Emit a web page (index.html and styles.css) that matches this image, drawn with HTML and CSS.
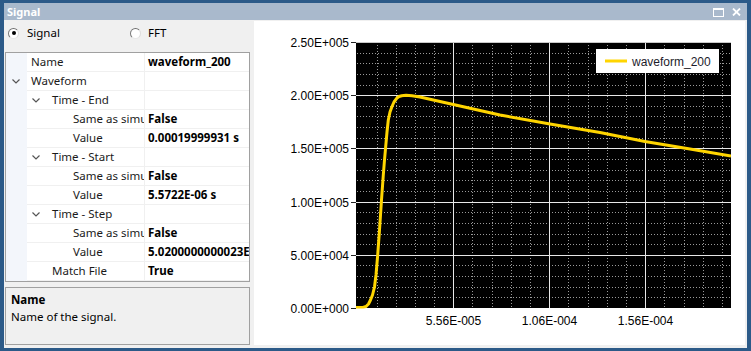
FILE: index.html
```html
<!DOCTYPE html>
<html>
<head>
<meta charset="utf-8">
<link rel="stylesheet" href="styles.css">
</head>
<body>
<div class="window">
  <div class="titlebar">
    <span class="title">Signal</span>
    <span class="tbtns">
      <svg class="tb-max" width="11" height="9" viewBox="0 0 11 9"><rect x="0.5" y="0.5" width="10" height="8" fill="none" stroke="#fff" stroke-width="1"/><rect x="0" y="0" width="11" height="2" fill="#fff"/></svg>
      <svg class="tb-close" width="9" height="8" viewBox="0 0 9 8"><path d="M1 0.5 L8 7.5 M8 0.5 L1 7.5" stroke="#fff" stroke-width="1.8"/></svg>
    </span>
  </div>
  <div class="content">
    <div class="left">
      <div class="radios">
        <label class="radio"><span class="rcircle checked"></span><span>Signal</span></label>
        <label class="radio fft"><span class="rcircle"></span><span>FFT</span></label>
      </div>
      <div class="grid">
        <div class="row"><span class="gut"></span><span class="nm l1">Name</span><span class="vl">waveform_200</span></div>
        <div class="row"><span class="gut"><svg class="chev" width="8" height="5" viewBox="0 0 8 5"><polyline points="0.5,0.5 4,4 7.5,0.5" fill="none" stroke="#555" stroke-width="1.2"/></svg></span><span class="nm l1">Waveform</span><span class="vl"></span></div>
        <div class="row"><span class="gut"></span><span class="nm l2c"><svg class="chev" width="8" height="5" viewBox="0 0 8 5"><polyline points="0.5,0.5 4,4 7.5,0.5" fill="none" stroke="#555" stroke-width="1.2"/></svg>Time - End</span><span class="vl"></span></div>
        <div class="row"><span class="gut"></span><span class="nm l3">Same as simulation</span><span class="vl">False</span></div>
        <div class="row"><span class="gut"></span><span class="nm l3">Value</span><span class="vl">0.00019999931 s</span></div>
        <div class="row"><span class="gut"></span><span class="nm l2c"><svg class="chev" width="8" height="5" viewBox="0 0 8 5"><polyline points="0.5,0.5 4,4 7.5,0.5" fill="none" stroke="#555" stroke-width="1.2"/></svg>Time - Start</span><span class="vl"></span></div>
        <div class="row"><span class="gut"></span><span class="nm l3">Same as simulation</span><span class="vl">False</span></div>
        <div class="row"><span class="gut"></span><span class="nm l3">Value</span><span class="vl">5.5722E-06 s</span></div>
        <div class="row"><span class="gut"></span><span class="nm l2c"><svg class="chev" width="8" height="5" viewBox="0 0 8 5"><polyline points="0.5,0.5 4,4 7.5,0.5" fill="none" stroke="#555" stroke-width="1.2"/></svg>Time - Step</span><span class="vl"></span></div>
        <div class="row"><span class="gut"></span><span class="nm l3">Same as simulation</span><span class="vl">False</span></div>
        <div class="row"><span class="gut"></span><span class="nm l3">Value</span><span class="vl">5.0200000000023E-07 s</span></div>
        <div class="row"><span class="gut"></span><span class="nm l2">Match File</span><span class="vl">True</span></div>
      </div>
      <div class="desc">
        <div class="desc-title">Name</div>
        <div>Name of the signal.</div>
      </div>
    </div>
    <div class="chart">
      <svg width="491" height="324" viewBox="254 21 491 324" class="chart-svg">
        <defs><clipPath id="plotclip"><rect x="356" y="42" width="375" height="266.5"/></clipPath></defs>
        <rect x="356" y="42" width="375" height="266" fill="#000"/>
        <g stroke="#9a9a9a" stroke-width="1" stroke-dasharray="1 2" shape-rendering="crispEdges">
          <line x1="377.5" y1="42" x2="377.5" y2="308"/><line x1="396.5" y1="42" x2="396.5" y2="308"/>
          <line x1="415.5" y1="42" x2="415.5" y2="308"/><line x1="434.5" y1="42" x2="434.5" y2="308"/>
          <line x1="472.5" y1="42" x2="472.5" y2="308"/><line x1="492.5" y1="42" x2="492.5" y2="308"/>
          <line x1="511.5" y1="42" x2="511.5" y2="308"/><line x1="530.5" y1="42" x2="530.5" y2="308"/>
          <line x1="568.5" y1="42" x2="568.5" y2="308"/><line x1="588.5" y1="42" x2="588.5" y2="308"/>
          <line x1="607.5" y1="42" x2="607.5" y2="308"/><line x1="626.5" y1="42" x2="626.5" y2="308"/>
          <line x1="664.5" y1="42" x2="664.5" y2="308"/><line x1="684.5" y1="42" x2="684.5" y2="308"/>
          <line x1="703.5" y1="42" x2="703.5" y2="308"/><line x1="722.5" y1="42" x2="722.5" y2="308"/>
          <line x1="357" y1="53.5" x2="731" y2="53.5"/><line x1="357" y1="63.5" x2="731" y2="63.5"/>
          <line x1="357" y1="74.5" x2="731" y2="74.5"/><line x1="357" y1="85.5" x2="731" y2="85.5"/>
          <line x1="357" y1="106.5" x2="731" y2="106.5"/><line x1="357" y1="116.5" x2="731" y2="116.5"/>
          <line x1="357" y1="127.5" x2="731" y2="127.5"/><line x1="357" y1="138.5" x2="731" y2="138.5"/>
          <line x1="357" y1="159.5" x2="731" y2="159.5"/><line x1="357" y1="170.5" x2="731" y2="170.5"/>
          <line x1="357" y1="180.5" x2="731" y2="180.5"/><line x1="357" y1="191.5" x2="731" y2="191.5"/>
          <line x1="357" y1="212.5" x2="731" y2="212.5"/><line x1="357" y1="223.5" x2="731" y2="223.5"/>
          <line x1="357" y1="234.5" x2="731" y2="234.5"/><line x1="357" y1="244.5" x2="731" y2="244.5"/>
          <line x1="357" y1="265.5" x2="731" y2="265.5"/><line x1="357" y1="276.5" x2="731" y2="276.5"/>
          <line x1="357" y1="287.5" x2="731" y2="287.5"/><line x1="357" y1="297.5" x2="731" y2="297.5"/>
        </g>
        <g stroke="#e8e8e8" stroke-width="1" shape-rendering="crispEdges">
          <line x1="453.5" y1="42" x2="453.5" y2="308"/>
          <line x1="549.5" y1="42" x2="549.5" y2="308"/>
          <line x1="645.5" y1="42" x2="645.5" y2="308"/>
          <line x1="356" y1="95.5" x2="731" y2="95.5"/>
          <line x1="356" y1="148.5" x2="731" y2="148.5"/>
          <line x1="356" y1="202.5" x2="731" y2="202.5"/>
          <line x1="356" y1="255.5" x2="731" y2="255.5"/>
        </g>
        <line x1="356" y1="42.5" x2="731" y2="42.5" stroke="#c8c8c8" shape-rendering="crispEdges"/>
        <g stroke="#222" stroke-width="1" shape-rendering="crispEdges">
          <line x1="351" y1="42.5" x2="356" y2="42.5"/>
          <line x1="351" y1="95.5" x2="356" y2="95.5"/>
          <line x1="351" y1="148.5" x2="356" y2="148.5"/>
          <line x1="351" y1="202.5" x2="356" y2="202.5"/>
          <line x1="351" y1="255.5" x2="356" y2="255.5"/>
          <line x1="351" y1="308.5" x2="356" y2="308.5"/>
        </g>
        <polyline clip-path="url(#plotclip)" fill="none" stroke="#ffd500" stroke-width="3" stroke-linejoin="round" points="356,307.5 363,307.5 366,306.5 368.5,304 370.5,300 372.5,295 374.5,287 376,275 377.7,255 379.5,230 381.5,200 383.3,175 384.5,160 385.7,146.7 387,132 388.3,120 390,112 392,106.5 394,102 396.7,98.3 399,96.5 401.7,95.7 406,95.2 412,95.8 420,97 440,101.5 470,108.2 500,115 550,124 600,132.5 645,141.5 690,149 731,156"/>
        <g class="ylab" text-anchor="end">
          <text x="349" y="46.5">2.50E+005</text>
          <text x="349" y="99.5">2.00E+005</text>
          <text x="349" y="152.5">1.50E+005</text>
          <text x="349" y="206.5">1.00E+005</text>
          <text x="349" y="259.5">5.00E+004</text>
          <text x="349" y="312.5">0.00E+000</text>
        </g>
        <g class="xlab" text-anchor="middle">
          <text x="453.5" y="325">5.56E-005</text>
          <text x="549.5" y="325">1.06E-004</text>
          <text x="645.5" y="325">1.56E-004</text>
        </g>
        <rect x="596" y="49" width="123" height="24" fill="#fff"/>
        <line x1="605" y1="61" x2="627" y2="61" stroke="#ffd500" stroke-width="3"/>
        <text class="legend" x="632" y="65.5">waveform_200</text>
      </svg>
    </div>
  </div>
</div>
</body>
</html>
```
FILE: styles.css
```css
html, body {
  margin: 0;
  padding: 0;
}
body {
  width: 751px;
  height: 351px;
  overflow: hidden;
  background: #2c5a88;
  font-family: "Noto Sans", "Open Sans", sans-serif;
  font-size: 11.5px;
  color: #1a1a1a;
}
.window {
  box-sizing: border-box;
  height: 351px;
  padding: 3px 4px 3px 4px;
  display: flex;
  flex-direction: column;
}
.titlebar {
  height: 17px;
  background: #a9b9cc;
  display: flex;
  align-items: center;
  justify-content: space-between;
  padding: 0 6px 0 3px;
  flex: none;
}
.title {
  color: #fff;
  font-weight: 700;
  font-size: 11px;
  line-height: 17px;
}
.tbtns {
  display: flex;
  align-items: center;
  gap: 8px;
}
.tbtns svg { display: block; }
.tb-max { margin-top: 1px; }
.content {
  flex: 1;
  background: #f0f0f0;
  display: flex;
  padding: 1px 2px 3px 1px;
  min-height: 0;
}
.left {
  width: 245px;
  margin-right: 4px;
  display: flex;
  flex-direction: column;
  flex: none;
}
.radios {
  height: 31px;
  box-sizing: border-box;
  padding-top: 4px;
  display: flex;
  align-items: flex-start;
}
.radio {
  display: flex;
  align-items: center;
  height: 16px;
  line-height: 16px;
  color: #000;
}
.radio:first-child { margin-left: 3px; width: 122px; }
.rcircle {
  box-sizing: border-box;
  width: 11px;
  height: 11px;
  border-radius: 50%;
  background: #fff;
  border: 1px solid;
  border-color: #6e6e6e #dcdcdc #e8e8e8 #7a7a7a;
  margin-right: 8px;
  position: relative;
}
.rcircle.checked::after {
  content: "";
  position: absolute;
  left: 2.5px;
  top: 2.5px;
  width: 4px;
  height: 4px;
  border-radius: 50%;
  background: #000;
}
.fft .rcircle { margin-right: 7px; }
.grid {
  box-sizing: border-box;
  height: 230px;
  border: 1px solid #a0a0a0;
  background: #fff;
  overflow: hidden;
  flex: none;
}
.row {
  display: flex;
  height: 19px;
}
.gut {
  width: 21px;
  flex: none;
  background: #f3f6fb;
  display: flex;
  align-items: center;
  padding-left: 6px;
  box-sizing: border-box;
}
.nm, .vl {
  box-sizing: border-box;
  height: 19px;
  line-height: 18px;
  border-bottom: 1px solid #f0f0f0;
  white-space: nowrap;
  overflow: hidden;
}
.nm {
  width: 117px;
  flex: none;
  display: flex;
  align-items: center;
}
.vl {
  flex: 1;
  border-left: 1px solid #f0f0f0;
  padding-left: 3px;
  font-weight: 700;
  color: #000;
  overflow: hidden;
}
.l1 { padding-left: 4px; }
.l2 { padding-left: 25px; }
.l2c { padding-left: 5px; }
.l2c .chev { margin-right: 12px; }
.l3 { padding-left: 46px; text-overflow: clip; }
.chev { display: block; flex: none; }
.desc {
  margin-top: 5px;
  box-sizing: border-box;
  height: 58px;
  border: 1px solid #a0a0a0;
  background: #f0f0f0;
  padding: 3px 5px 0 5px;
  line-height: 17px;
  color: #000;
}
.desc-title { font-weight: 700; }
.chart {
  flex: 1;
  background: #fff;
  overflow: hidden;
}
.chart-svg { display: block; }
.ylab, .xlab, .legend {
  font-family: "Liberation Sans", Arial, sans-serif;
  font-size: 12px;
  fill: #000;
}
.legend { fill: #1c1c2c; }
```
